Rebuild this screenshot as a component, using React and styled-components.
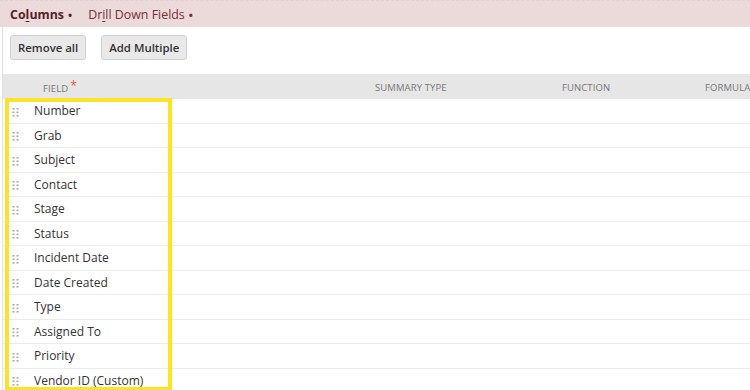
import React from "react";
import styled, { createGlobalStyle } from "styled-components";

const Global = createGlobalStyle`
  html, body { margin: 0; padding: 0; background: #fff; }
  body { font-family: "Open Sans", "Liberation Sans", sans-serif; color: #333; overflow: hidden; }
`;

const Page = styled.div`
  width: 750px;
  height: 390px;
  position: relative;
  overflow: hidden;
`;

const TabBar = styled.div`
  height: 27px;
  background: #ecd9da;
  border-top: 1px dashed #e6cfd0;
  box-sizing: border-box;
  display: flex;
  align-items: center;
  padding-left: 10px;
  gap: 16px;
`;

const Tab = styled.div`
  font-size: 12.4px;
  color: ${p => (p.$active ? "#5b1f22" : "#7a2f33")};
  font-weight: ${p => (p.$active ? 700 : 400)};
  position: relative;
  white-space: nowrap;
  u { text-decoration: underline; text-underline-offset: 2px; }
`;

const Dot = styled.span`
  font-size: 11px;
  margin-left: 4px;
  font-weight: 700;
`;

const Body = styled.div`
  margin-left: 2px;
  border-left: 1px solid #e2e2e2;
  height: 363px;
`;

const Toolbar = styled.div`
  display: flex;
  gap: 15px;
  padding: 8px 0 0 7px;
  height: 47px;
  box-sizing: border-box;
`;

const Button = styled.button`
  font-family: "Open Sans", "Liberation Sans", sans-serif;
  font-size: 11.4px;
  font-weight: 600;
  color: #333;
  background: #e9e9e9;
  border: 1px solid #cfcfcf;
  border-radius: 3px;
  height: 25px;
  padding: 0 7px;
  line-height: 23px;
`;

const HeaderRow = styled.div`
  display: grid;
  grid-template-columns: 332px 187px 143px 1fr;
  height: 25px;
  background: #e6e6e6;
  align-items: center;
  font-size: 9.5px;
  color: #777;
  text-transform: uppercase;
  letter-spacing: 0.1px;
  padding-top: 2px;
  box-sizing: border-box;
`;

const HeadCell = styled.div`
  padding-left: ${p => p.$pad || 0}px;
  white-space: nowrap;
`;

const Star = styled.span`
  color: #e0603a;
  font-size: 12px;
  margin-left: 2px;
  position: relative;
  top: -2px;
`;

const Row = styled.div`
  display: flex;
  align-items: center;
  height: 24.5px;
  box-sizing: border-box;
  border-bottom: 1px solid #ececec;
  font-size: 12px;
  color: #333;
`;

const Handle = styled.span`
  width: 31px;
  display: flex;
  justify-content: flex-start;
  padding-left: 9px;
  box-sizing: border-box;
  margin-top: 2px;
`;

const Highlight = styled.div`
  position: absolute;
  left: 5px;
  top: 98px;
  width: 167px;
  height: 293px;
  box-sizing: border-box;
  border: 4px solid #fde22a;
  pointer-events: none;
`;

const Grip = () => (
  <svg width="7" height="10" viewBox="0 0 7 10">
    {[0, 1, 2].map(r =>
      [0, 1].map(c => (
        <rect key={`${r}${c}`} x={c * 4 + 0.5} y={r * 3.5 + 1} width="2" height="1.6" fill="#a9a9a9" />
      ))
    )}
  </svg>
);

const fields = [
  "Number", "Grab", "Subject", "Contact", "Stage", "Status", "Incident Date",
  "Date Created", "Type", "Assigned To", "Priority", "Vendor ID (Custom)",
];

export default function App() {
  return (
    <Page>
      <Global />
      <TabBar>
        <Tab $active>Co<u>l</u>umns<Dot>•</Dot></Tab>
        <Tab>Dr<u>i</u>ll Down Fields<Dot>•</Dot></Tab>
      </TabBar>
      <Body>
        <Toolbar>
          <Button>Remove all</Button>
          <Button>Add Multiple</Button>
        </Toolbar>
        <HeaderRow>
          <HeadCell $pad={40}>Field<Star>*</Star></HeadCell>
          <HeadCell $pad={40}>Summary Type</HeadCell>
          <HeadCell $pad={40}>Function</HeadCell>
          <HeadCell $pad={40}>Formula</HeadCell>
        </HeaderRow>
        {fields.map(f => (
          <Row key={f}>
            <Handle><Grip /></Handle>
            {f}
          </Row>
        ))}
      </Body>
      <Highlight />
    </Page>
  );
}
